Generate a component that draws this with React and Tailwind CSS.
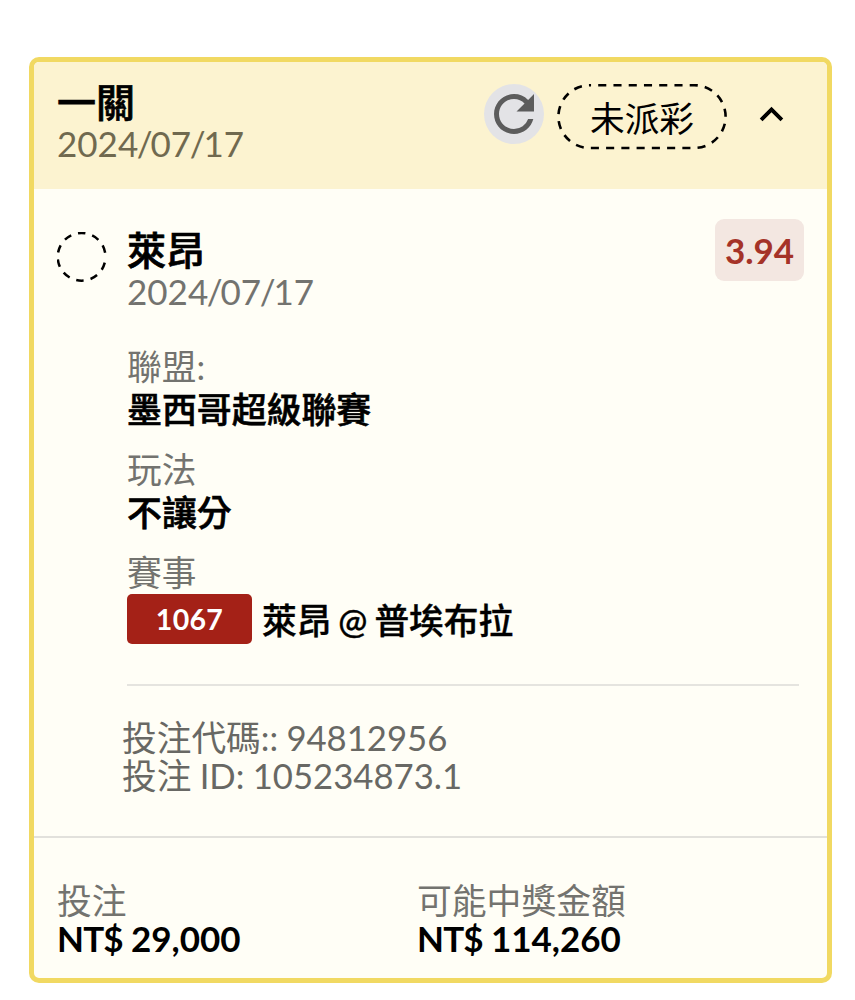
import React, { useState } from "react";
import { MdExpandLess, MdExpandMore, MdRefresh } from "react-icons/md";

const ticket = {
  title: "一關",
  date: "2024/07/17",
  status: "未派彩",
  stake: "29,000",
  payout: "114,260",
  code: "94812956",
  betId: "105234873.1",
  pick: {
    team: "萊昂",
    date: "2024/07/17",
    odds: "3.94",
    league: "墨西哥超級聯賽",
    market: "不讓分",
    matchNo: "1067",
    match: "萊昂 @ 普埃布拉",
  },
};

// Slashes sit tight against the digits around them
function TicketDate({ value }) {
  return value.split("/").map((part, i) => (
    <React.Fragment key={i}>
      {i > 0 && <span className="-ml-[1.5px] -mr-[2px]">/</span>}
      {part}
    </React.Fragment>
  ));
}

function StatusPill({ children }) {
  return (
    <div className="relative ml-[13px] flex h-[66px] w-[170px] items-center justify-center pt-[4px] text-[34.7px] leading-none text-black">
      <svg className="absolute inset-0" width="170" height="66" fill="none">
        <rect
          x="1.4"
          y="1.2"
          width="167.2"
          height="62.8"
          rx="31.4"
          stroke="#000"
          strokeWidth="2.6"
          strokeDasharray="8.1 7.15"
          strokeDashoffset="-8.4"
        />
      </svg>
      <span>{children}</span>
    </div>
  );
}

function PendingCircle() {
  return (
    <svg className="mt-[43px] shrink-0" width="50" height="50" fill="none">
      <circle
        cx="24.6"
        cy="24.8"
        r="23.9"
        stroke="#000"
        strokeWidth="2.5"
        strokeDasharray="7.6 7"
        strokeDashoffset="-6"
      />
    </svg>
  );
}

function Field({ label, children }) {
  return (
    <div className="mb-[17px]">
      <p className="h-[43px] text-[34.7px] leading-[43px] text-[#73736f]">{label}</p>
      <p className="h-[43px] text-[34.9px] font-medium leading-[43px] [-webkit-text-stroke:0.6px_#000]">
        {children}
      </p>
    </div>
  );
}

function Amount({ label, value }) {
  return (
    <div>
      <p className="h-[38px] text-[34.8px] leading-[38px] text-[#73736f]">{label}</p>
      <p className="h-[38px] text-[35px] font-bold leading-[36px]">
        <span className="tracking-[-0.8px]">NT$</span>
        <span className="ml-[8px]">{value}</span>
      </p>
    </div>
  );
}

export default function App() {
  const [open, setOpen] = useState(true);
  const { pick } = ticket;

  return (
    <div className="h-[1000px] w-[855px] overflow-hidden bg-white pl-[29px] pt-[57px] font-['Lato','Noto_Sans_CJK_TC',sans-serif] text-black">
      <div className="flex h-[926px] w-[803px] flex-col overflow-hidden rounded-[10px] border-[5px] border-[#f1d962] bg-[#fffef6]">
        {/* Header */}
        <div className="flex h-[127px] shrink-0 items-start bg-[#fcf3d0] pl-[23px]">
          <div className="w-[427px] pt-[20px]">
            <h1 className="h-[40px] text-[39px] font-medium leading-[40px] [-webkit-text-stroke:0.7px_#000]">
              {ticket.title}
            </h1>
            <p className="h-[42px] text-[35px] leading-[42px] text-[#70694f]">
              <TicketDate value={ticket.date} />
            </p>
          </div>
          <div className="flex items-start pt-[22px]">
            <button className="flex h-[60px] w-[60px] items-center justify-center rounded-full bg-[#e3e3e6] text-[#5c5c5c]">
              <MdRefresh size={60} />
            </button>
            <StatusPill>{ticket.status}</StatusPill>
            <button className="ml-[21px] mt-[7px]" onClick={() => setOpen(!open)}>
              {open ? <MdExpandLess size={47} /> : <MdExpandMore size={47} />}
            </button>
          </div>
        </div>

        {/* Selection */}
        {open && (
          <div className="flex h-[649px] shrink-0 items-start border-b-2 border-[#e2e1dc] pl-[23px]">
            <PendingCircle />
            <div className="ml-[20px] w-[677px]">
              <div className="flex items-start justify-between pt-[30px]">
                <div className="pt-[11px]">
                  <h2 className="h-[40px] text-[39px] font-medium leading-[40px] [-webkit-text-stroke:0.7px_#000]">
                    {pick.team}
                  </h2>
                  <p className="h-[42px] text-[35px] leading-[42px] text-[#73736f]">
                    <TicketDate value={pick.date} />
                  </p>
                </div>
                <span className="flex h-[62px] w-[89px] items-center justify-center rounded-[9px] bg-[#f3e7e1] text-[35px] font-bold leading-none text-[#a53328]">
                  {pick.odds}
                </span>
              </div>

              <div className="pt-[33px]">
                <Field label="聯盟:">{pick.league}</Field>
                <Field label="玩法">{pick.market}</Field>
                <p className="h-[43px] text-[34.7px] leading-[43px] text-[#73736f]">賽事</p>
                <div className="flex h-[50px] items-center">
                  <span className="mr-[10px] flex h-[50px] w-[125px] items-center justify-center rounded-[5px] bg-[#a42117] text-[28.5px] font-bold tracking-[0.3px] text-white">
                    {pick.matchNo}
                  </span>
                  <span className="pt-[3px] text-[34.7px] font-medium leading-[50px] [-webkit-text-stroke:0.4px_#000] [word-spacing:-1.8px]">
                    {pick.match}
                  </span>
                </div>
              </div>

              <div className="mt-[40px] w-[672px] border-t-2 border-[#e5e4df]" />

              <div className="-ml-[5px] pt-[33px] text-[34.7px] leading-[38px] text-[#686864] [word-spacing:-0.6px]">
                <p>投注代碼:: {ticket.code}</p>
                <p>投注 ID: {ticket.betId}</p>
              </div>
            </div>
          </div>
        )}

        {/* Totals */}
        <div className="grid grid-cols-[360px_1fr] pl-[23px] pt-[44px]">
          <Amount label="投注" value={ticket.stake} />
          <Amount label="可能中獎金額" value={ticket.payout} />
        </div>
      </div>
    </div>
  );
}
